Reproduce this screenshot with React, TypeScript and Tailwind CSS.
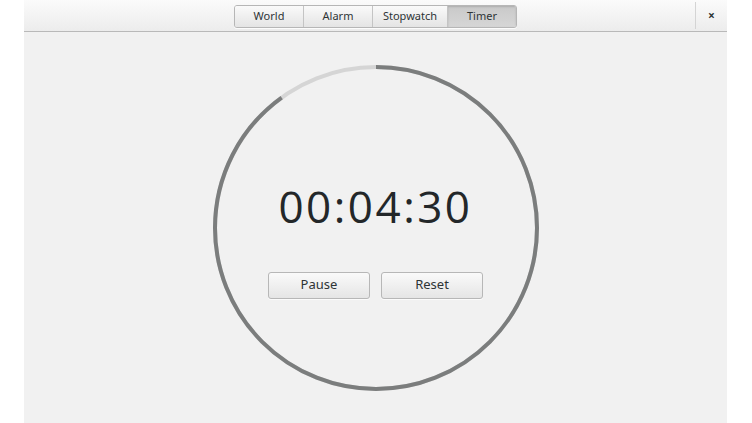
import React from "react";

const tabs = ["World", "Alarm", "Stopwatch", "Timer"];
const widths = ["w-[68px]", "w-[69px]", "w-[75px]", "w-[69px]"];

function TimerRing() {
  const r = 161;
  const c = 2 * Math.PI * r;
  return (
    <svg width="330" height="330" viewBox="0 0 330 330" className="absolute inset-0">
      <circle cx="165" cy="165" r={r} fill="none" stroke="#d5d5d5" strokeWidth="4" />
      <circle
        cx="165"
        cy="165"
        r={r}
        fill="none"
        stroke="#7b7d7d"
        strokeWidth="4"
        strokeDasharray={`${c * 0.9} ${c}`}
        transform="rotate(-90 165 165)"
      />
    </svg>
  );
}

export default function App() {
  return (
    <div className="flex h-[423px] w-[752px] bg-white font-['Noto_Sans',sans-serif]">
      <div className="ml-[24px] flex w-[703px] flex-col bg-[#f1f1f1]">
        <header className="flex h-[32px] items-center border-b border-[#b9b9b9] bg-gradient-to-b from-[#fbfbfb] to-[#ececec]">
          <div className="flex flex-1 justify-center pl-[32px]">
            <div className="mt-[1px] flex h-[23px] overflow-hidden rounded-[3px] border border-[#b6b6b6] shadow-[0_1px_0_rgba(255,255,255,0.8)]">
              {tabs.map((t, i) => (
                <div
                  key={t}
                  className={`flex items-center justify-center pt-[1px] text-[11px] text-[#2e3436] ${widths[i]} ${
                    i > 0 ? "border-l border-[#c4c4c4]" : ""
                  } ${
                    t === "Timer"
                      ? "bg-gradient-to-b from-[#c9c9c9] to-[#d6d6d6] shadow-[inset_0_1px_2px_rgba(0,0,0,0.15)]"
                      : "bg-gradient-to-b from-[#fafafa] to-[#e4e4e4]"
                  }`}
                >
                  {t}
                </div>
              ))}
            </div>
          </div>
          <div className="flex h-[27px] w-[32px] items-center justify-center border-l border-[#d4d4d4] text-[12px] font-bold text-[#2e3436]">
            ×
          </div>
        </header>
        <main className="flex flex-1 items-center justify-center">
          <div className="relative h-[330px] w-[330px]">
            <TimerRing />
            <div className="absolute inset-0 flex flex-col items-center pt-[121px]">
              <div className="font-['Open_Sans',sans-serif] text-[44px] font-normal leading-none tracking-[2.5px] text-[#232729]">
                00:04:30
              </div>
              <div className="mt-[44px] flex gap-[11px]">
                {["Pause", "Reset"].map((b) => (
                  <button
                    key={b}
                    className="h-[27px] w-[102px] rounded-[3px] border border-[#b7b7b7] bg-gradient-to-b from-[#fafafa] to-[#e5e5e5] text-[13px] text-[#2e3436] shadow-[0_1px_0_rgba(255,255,255,0.7)]"
                  >
                    {b}
                  </button>
                ))}
              </div>
            </div>
          </div>
        </main>
      </div>
    </div>
  );
}
